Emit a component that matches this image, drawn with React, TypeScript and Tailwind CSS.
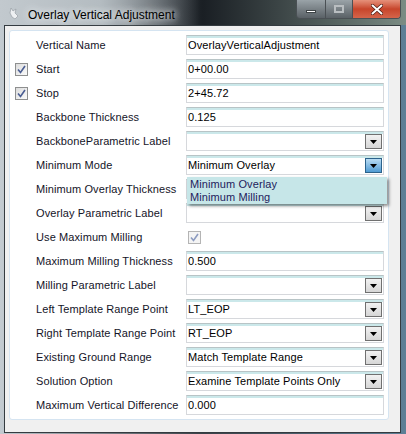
import React from "react";

type Row =
  | { label: string; kind: "text"; value: string; check?: boolean }
  | { label: string; kind: "combo"; value: string; open?: boolean }
  | { label: string; kind: "checkbox" };

const rows: Row[] = [
  { label: "Vertical Name", kind: "text", value: "OverlayVerticalAdjustment" },
  { label: "Start", kind: "text", value: "0+00.00", check: true },
  { label: "Stop", kind: "text", value: "2+45.72", check: true },
  { label: "Backbone Thickness", kind: "text", value: "0.125" },
  { label: "BackboneParametric Label", kind: "combo", value: "" },
  { label: "Minimum Mode", kind: "combo", value: "Minimum Overlay", open: true },
  { label: "Minimum Overlay Thickness", kind: "text", value: "" },
  { label: "Overlay Parametric Label", kind: "combo", value: "" },
  { label: "Use Maximum Milling", kind: "checkbox" },
  { label: "Maximum Milling Thickness", kind: "text", value: "0.500" },
  { label: "Milling Parametric Label", kind: "combo", value: "" },
  { label: "Left Template Range Point", kind: "combo", value: "LT_EOP" },
  { label: "Right Template Range Point", kind: "combo", value: "RT_EOP" },
  { label: "Existing Ground Range", kind: "combo", value: "Match Template Range" },
  { label: "Solution Option", kind: "combo", value: "Examine Template Points Only" },
  { label: "Maximum Vertical Difference", kind: "text", value: "0.000" },
];

function CheckBox({ dim }: { dim?: boolean }) {
  return (
    <span
      className={`flex w-[13px] h-[13px] items-center justify-center border ${
        dim ? "border-[#b4b4b4] bg-[#f4f4f4]" : "border-[#8e8f8f] bg-gradient-to-br from-[#dcdcdc] to-[#fbfbfb]"
      }`}
    >
      <svg width="9" height="9" viewBox="0 0 9 9">
        <path
          d="M1 4.5 L3.5 7.5 L8 1"
          fill="none"
          stroke={dim ? "#8c9bc0" : "#4a5d92"}
          strokeWidth="1.6"
        />
      </svg>
    </span>
  );
}

function TextBox({ value }: { value: string }) {
  return (
    <div className="w-[198px] h-[20px] border border-[#d6d8dc] border-t-[#b8c4c6] bg-white shadow-[inset_0_2px_0_#cbe8ea] flex items-center pl-[1px] pt-[1px] text-black">
      {value}
    </div>
  );
}

function ComboBox({ value, open }: { value: string; open?: boolean }) {
  return (
    <div className="relative w-[198px] h-[20px] border border-[#d6d8dc] border-t-[#b8c4c6] bg-white shadow-[inset_0_2px_0_#cbe8ea] flex items-center pl-[1px] pt-[1px] text-black">
      <span className="flex-1">{value}</span>
      <span
        className={`mr-[1px] w-[17px] h-[15px] border flex items-center justify-center ${
          open
            ? "border-[#2c628b] bg-gradient-to-b from-[#b9dcf3] to-[#4e9bd3]"
            : "border-[#707070] bg-gradient-to-b from-[#f2f2f2] to-[#d6d6d6]"
        }`}
      >
        <svg width="7" height="4" viewBox="0 0 7 4">
          <path d="M0 0 H7 L3.5 4 Z" fill="#000" />
        </svg>
      </span>
      {open && (
        <div className="absolute left-[0px] top-[21px] z-10 w-[200px] h-[27px] bg-[#c6e6e8] shadow-[2px_2px_3px_rgba(0,0,0,0.45)] flex flex-col pl-[3px] text-[#1e1b5c] leading-[13px] pt-[1px]">
          <span>Minimum Overlay</span>
          <span>Minimum Milling</span>
        </div>
      )}
    </div>
  );
}

export default function App() {
  return (
    <div
      className="w-[406px] h-[434px] flex flex-col bg-gradient-to-r from-[#c3cbd1] via-[#3a4147] to-[#5d7f96] text-[11px] tracking-[0.1px]"
      style={{ fontFamily: "'Liberation Sans', Arial, sans-serif" }}
    >
      {/* Title bar */}
      <div className="relative h-[25px] flex items-start shrink-0 bg-gradient-to-r from-[#bfc7cc] via-[#1a1f24] to-[#7b8c84]">
        <div className="absolute left-0 top-0 w-[200px] h-[25px] bg-gradient-to-r from-[#c2c9ce] via-[#b4bcc1] to-transparent" />
        <svg className="relative ml-[9px] mt-[7px]" width="10" height="13" viewBox="0 0 10 13">
          <path d="M2 1 L4 4 L7 2 L6 6 L9 9 L6 12 L3 10 L1 6 Z" fill="#eef0f2" stroke="#8e969c" strokeWidth="0.6" />
        </svg>
        <span className="relative ml-[9px] mt-[6px] text-[12px] tracking-normal text-black [text-shadow:0_0_6px_#e8ecee,0_0_10px_#e8ecee]">
          Overlay Vertical Adjustment
        </span>
        <div className="relative ml-auto mr-[5px] flex h-[19px] rounded-b-[4px] border border-t-0 border-[#4a5054] overflow-hidden">
          <div className="w-[29px] h-full flex items-center justify-center bg-gradient-to-b from-[#9aa3a8] to-[#5a6166] border-r border-[#4a5054]">
            <span className="w-[10px] h-[3px] bg-white border border-[#3e4446] mt-[5px]" />
          </div>
          <div className="w-[27px] h-full flex items-center justify-center bg-gradient-to-b from-[#9aa3a8] to-[#5a6166] border-r border-[#4a5054]">
            <span className="w-[10px] h-[8px] border-[2px] border-[#b9bec1]" />
          </div>
          <div className="w-[47px] h-full flex items-center justify-center bg-gradient-to-b from-[#e5917b] via-[#c7452b] to-[#d5644a]">
            <svg width="12" height="11" viewBox="0 0 12 11">
              <path d="M1.5 1.5 L10.5 9.5 M10.5 1.5 L1.5 9.5" stroke="#4a1b12" strokeWidth="3.4" strokeLinecap="round" />
              <path d="M1.5 1.5 L10.5 9.5 M10.5 1.5 L1.5 9.5" stroke="#ffffff" strokeWidth="2" strokeLinecap="round" />
            </svg>
          </div>
        </div>
      </div>

      {/* Client area */}
      <div className="ml-[4px] mr-[5px] mb-[1px] flex-1 border border-[#343b40] bg-[#f0f0f0] pl-[4px] pt-[4px]">
        <div className="w-[380px] h-[390px] rounded-[3px] border border-[#d5e4f1] bg-white pt-[2px] flex flex-col">
          {rows.map((r) => (
            <div key={r.label} className="h-[24px] flex items-center text-[#141428]">
              <div className="w-[26px] pl-[5px] flex items-center">
                {r.kind === "text" && r.check && <CheckBox />}
              </div>
              <div className="w-[150px] whitespace-nowrap">{r.label}</div>
              {r.kind === "text" && <TextBox value={r.value} />}
              {r.kind === "combo" && <ComboBox value={r.value} open={r.open} />}
              {r.kind === "checkbox" && (
                <div className="pl-[2px]">
                  <CheckBox dim />
                </div>
              )}
            </div>
          ))}
        </div>
      </div>
    </div>
  );
}
